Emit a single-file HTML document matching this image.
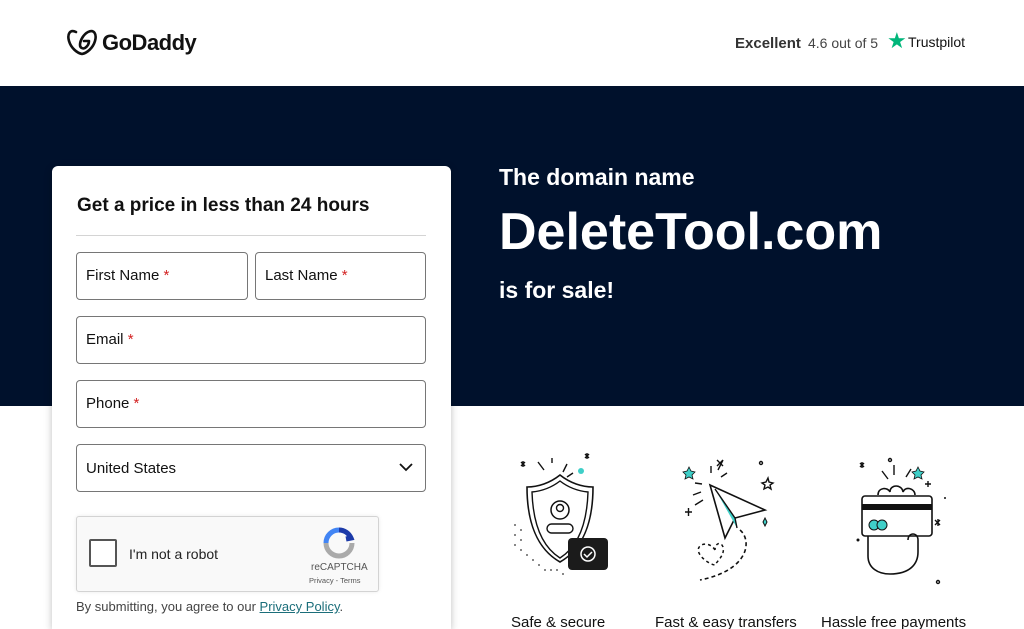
<!DOCTYPE html>
<html style="width:1024px;height:629px;overflow:hidden"><head><meta charset="utf-8"><style>
*{box-sizing:border-box;margin:0;padding:0}
body{width:1024px;height:629px;overflow:hidden;background:#fff;font-family:"Liberation Sans",sans-serif;color:#111;position:relative}
.hdr{height:86px;position:relative}
.band{position:absolute;top:86px;left:0;width:1024px;height:320px;background:#00112c}
.card{position:absolute;left:52px;top:166px;width:399px;height:463px;background:#fff;border-radius:6px 6px 0 0;box-shadow:0 2px 8px rgba(0,0,0,.25)}
.card h2{position:absolute;left:25px;top:29px;font-size:19px;font-weight:bold;color:#111}
.hr{position:absolute;left:24px;top:69px;width:350px;border-top:1px solid #d4d4d4}
.in{position:absolute;height:48px;border:1px solid #767676;border-radius:4px;font-size:15px;color:#111;padding:14px 0 0 9px}
.in b{color:#d32222;font-weight:normal}
.t{position:absolute;font-size:15px}
</style></head><body>
<div class="hdr">
<svg style="position:absolute;left:67px;top:29px" width="30" height="28" viewBox="0 0 30 28"><path d="M9 3C3 0 0 5 2 12c2 7 8 12 13 13 5-1 11-6 13-13 2-7-1-12-7-9-4 2-8 8-8 13 0 3 3 4 5 3 3-2 4-5 4-7h-5" fill="none" stroke="#111" stroke-width="2.6" stroke-linecap="round" stroke-linejoin="round"/></svg>
<div style="position:absolute;left:102px;top:30px;font-size:22px;font-weight:bold;letter-spacing:-.5px">GoDaddy</div>
<div style="position:absolute;left:735px;top:35px;font-size:15px;font-weight:bold;color:#333">Excellent</div>
<div style="position:absolute;left:808px;top:35px;font-size:14px;color:#444">4.6 out of 5</div>
<div style="position:absolute;left:887px;top:28px;font-size:22px;color:#00b67a">★</div>
<div style="position:absolute;left:908px;top:34px;font-size:14px;color:#111">Trustpilot</div>
</div>
<div class="band">
<div style="position:absolute;left:499px;top:78px;color:#fff;font-size:23px;font-weight:bold">The domain name</div>
<div style="position:absolute;left:499px;top:116px;color:#fff;font-size:52px;font-weight:bold;letter-spacing:0px">DeleteTool.com</div>
<div style="position:absolute;left:499px;top:191px;color:#fff;font-size:23px;font-weight:bold">is for sale!</div>
</div>
<div class="card">
<h2>Get a price in less than 24 hours</h2>
<div class="hr"></div>
<div class="in" style="left:24px;top:86px;width:172px">First Name <b>*</b></div>
<div class="in" style="left:203px;top:86px;width:171px">Last Name <b>*</b></div>
<div class="in" style="left:24px;top:150px;width:350px">Email <b>*</b></div>
<div class="in" style="left:24px;top:214px;width:350px">Phone <b>*</b></div>
<div class="in" style="left:24px;top:278px;width:350px;padding-top:15px">United States<svg style="position:absolute;right:12px;top:18px" width="14" height="9"><path d="M1 1l6 6 6-6" fill="none" stroke="#111" stroke-width="1.8"/></svg></div>
<div style="position:absolute;left:24px;top:350px;width:303px;height:76px;background:#f9f9f9;border:1px solid #d3d3d3;border-radius:3px;box-shadow:0 0 4px rgba(0,0,0,.08)">
<div style="position:absolute;left:12px;top:22px;width:28px;height:28px;border:2px solid #555;border-radius:2px;background:#fff"></div>
<div style="position:absolute;left:52px;top:29px;font-size:14px;color:#222">I'm not a robot</div>
<svg style="position:absolute;left:246px;top:10px" width="32" height="32" viewBox="0 0 32 32"><path d="M16 3a13 13 0 0 1 12 8l-5 1" fill="none" stroke="#1c3aa9" stroke-width="5"/><path d="M3 16A13 13 0 0 1 16 3" fill="none" stroke="#4285f4" stroke-width="5"/><path d="M29 16A13 13 0 0 1 3 16" fill="none" stroke="#aaa" stroke-width="5"/></svg>
<div style="position:absolute;left:234px;top:45px;font-size:10px;color:#555">reCAPTCHA</div>
<div style="position:absolute;left:232px;top:59px;font-size:7.5px;color:#555">Privacy - Terms</div>
</div>
<div style="position:absolute;left:24px;top:433px;font-size:13px;color:#444">By submitting, you agree to our <span style="color:#1b6e7a;text-decoration:underline">Privacy Policy</span>.</div>
</div>
<!-- icons -->
<svg style="position:absolute;left:505px;top:450px" width="110" height="135" viewBox="0 0 110 135">
<g stroke="#111" stroke-width="1.4" fill="none"><path d="M33 12l6 8M47 8v5M58 22l4-8M62 27l6-4M20 12l-4 4M16 12l4 4M18 11v6M84 4l-4 4M80 4l4 4M82 3v6"/></g>
<path d="M55 25c-10 8-22 12-33 12 0 35 10 62 33 75 23-13 33-40 33-75-11 0-23-4-33-12z" fill="none" stroke="#111" stroke-width="1.6"/>
<path d="M55 31c-9 7-18 10-28 11 1 31 9 54 28 66 19-12 27-35 28-66-10-1-19-4-28-11z" fill="none" stroke="#111" stroke-width="1.4"/>
<circle cx="55" cy="60" r="9" fill="none" stroke="#111" stroke-width="1.5"/><circle cx="55" cy="58" r="3.5" fill="none" stroke="#111" stroke-width="1.4"/>
<rect x="42" y="74" width="26" height="9" rx="4.5" fill="none" stroke="#111" stroke-width="1.4"/>
<circle cx="76" cy="21" r="3" fill="#3fcfc8"/>
<rect x="63" y="88" width="40" height="32" rx="4" fill="#1b1b1b"/><circle cx="83" cy="104" r="7" fill="none" stroke="#fff" stroke-width="1.5"/><path d="M79 104l3 3 5-5" fill="none" stroke="#fff" stroke-width="1.5"/>
<g fill="#333"><circle cx="10" cy="85" r=".9"/><circle cx="16" cy="90" r=".9"/><circle cx="10" cy="95" r=".9"/><circle cx="16" cy="100" r=".9"/><circle cx="22" cy="105" r=".9"/><circle cx="28" cy="110" r=".9"/><circle cx="34" cy="115" r=".9"/><circle cx="40" cy="120" r=".9"/><circle cx="46" cy="120" r=".9"/><circle cx="52" cy="120" r=".9"/><circle cx="58" cy="124" r=".9"/><circle cx="10" cy="75" r=".9"/><circle cx="16" cy="80" r=".9"/></g>
</svg>
<svg style="position:absolute;left:675px;top:455px" width="110" height="130" viewBox="0 0 110 130">
<g stroke="#111" stroke-width="1.4" fill="none"><path d="M36 11v7M48 5l-5 10M52 18l-6 4M20 28l7 1M18 40l8-3M20 50l8-5M10 57h7M13.5 53v8M42 5l6 6M48 5l-6 6"/><path d="M93 23l1 4 4 1-3 2 1 4-3-2-4 2 1-4-3-2 4-1z"/><circle cx="86" cy="8" r="1.5"/></g>
<path d="M35 30l55 25-30 8-10 20z" fill="none" stroke="#111" stroke-width="1.6"/><path d="M40 34l20 29 2 10" fill="#3fcfc8" stroke="#111" stroke-width="1.4"/>
<path d="M14 12l2 4 4 1-3 3 1 4-4-2-4 2 1-4-3-3 4-1z" fill="#3fcfc8" stroke="#111" stroke-width=".8"/>
<path d="M90 63l2 4-2 4-2-4z" fill="#3fcfc8" stroke="#111"/>
<path d="M65 75c12 10 10 40-40 50" fill="none" stroke="#111" stroke-width="1.6" stroke-dasharray="4 3"/>
<path d="M40 95c-6-10-20-6-16 3 4 8 14 12 16 12 3-5 10-10 8-18-2-6-8-4-8 3" fill="none" stroke="#111" stroke-width="1.5" stroke-dasharray="3 3"/>
</svg>
<svg style="position:absolute;left:850px;top:455px" width="110" height="130" viewBox="0 0 110 130">
<g stroke="#111" stroke-width="1.4" fill="none"><path d="M32 16l6 8M44 10v10M56 22l5-8M14 8l-4 4M10 8l4 4M12 7v6M78 26v6M75 29h6M90 65l-5 5M85 65l5 5M88 64v7"/><circle cx="40" cy="5" r="1.5"/><circle cx="88" cy="127" r="1.5"/></g>
<circle cx="8" cy="85" r="1.5" fill="#111"/><circle cx="95" cy="43" r="1" fill="#111"/>
<path d="M68 12l2 4 4 1-3 3 1 4-4-2-4 2 1-4-3-3 4-1z" fill="#3fcfc8" stroke="#111" stroke-width=".8"/>
<path d="M28 40c0-8 10-8 12-3 0-8 12-8 13 0 2-6 12-4 12 3" fill="none" stroke="#111" stroke-width="1.6"/>
<rect x="12" y="41" width="70" height="40" rx="3" fill="#fff" stroke="#111" stroke-width="1.6"/>
<rect x="12" y="49" width="70" height="6" fill="#111"/>
<circle cx="24" cy="70" r="5" fill="#3fcfc8" stroke="#111"/><circle cx="32" cy="70" r="5" fill="#3fcfc8" stroke="#111"/>
<path d="M18 81v20c0 12 10 18 22 18 20 0 28-10 28-22V85c0-8-10-8-10 0" fill="none" stroke="#111" stroke-width="1.6"/>
</svg>
<div class="t" style="left:511px;top:614px">Safe &amp; secure</div>
<div class="t" style="left:655px;top:614px">Fast &amp; easy transfers</div>
<div class="t" style="left:821px;top:614px">Hassle free payments</div>
</body></html>
